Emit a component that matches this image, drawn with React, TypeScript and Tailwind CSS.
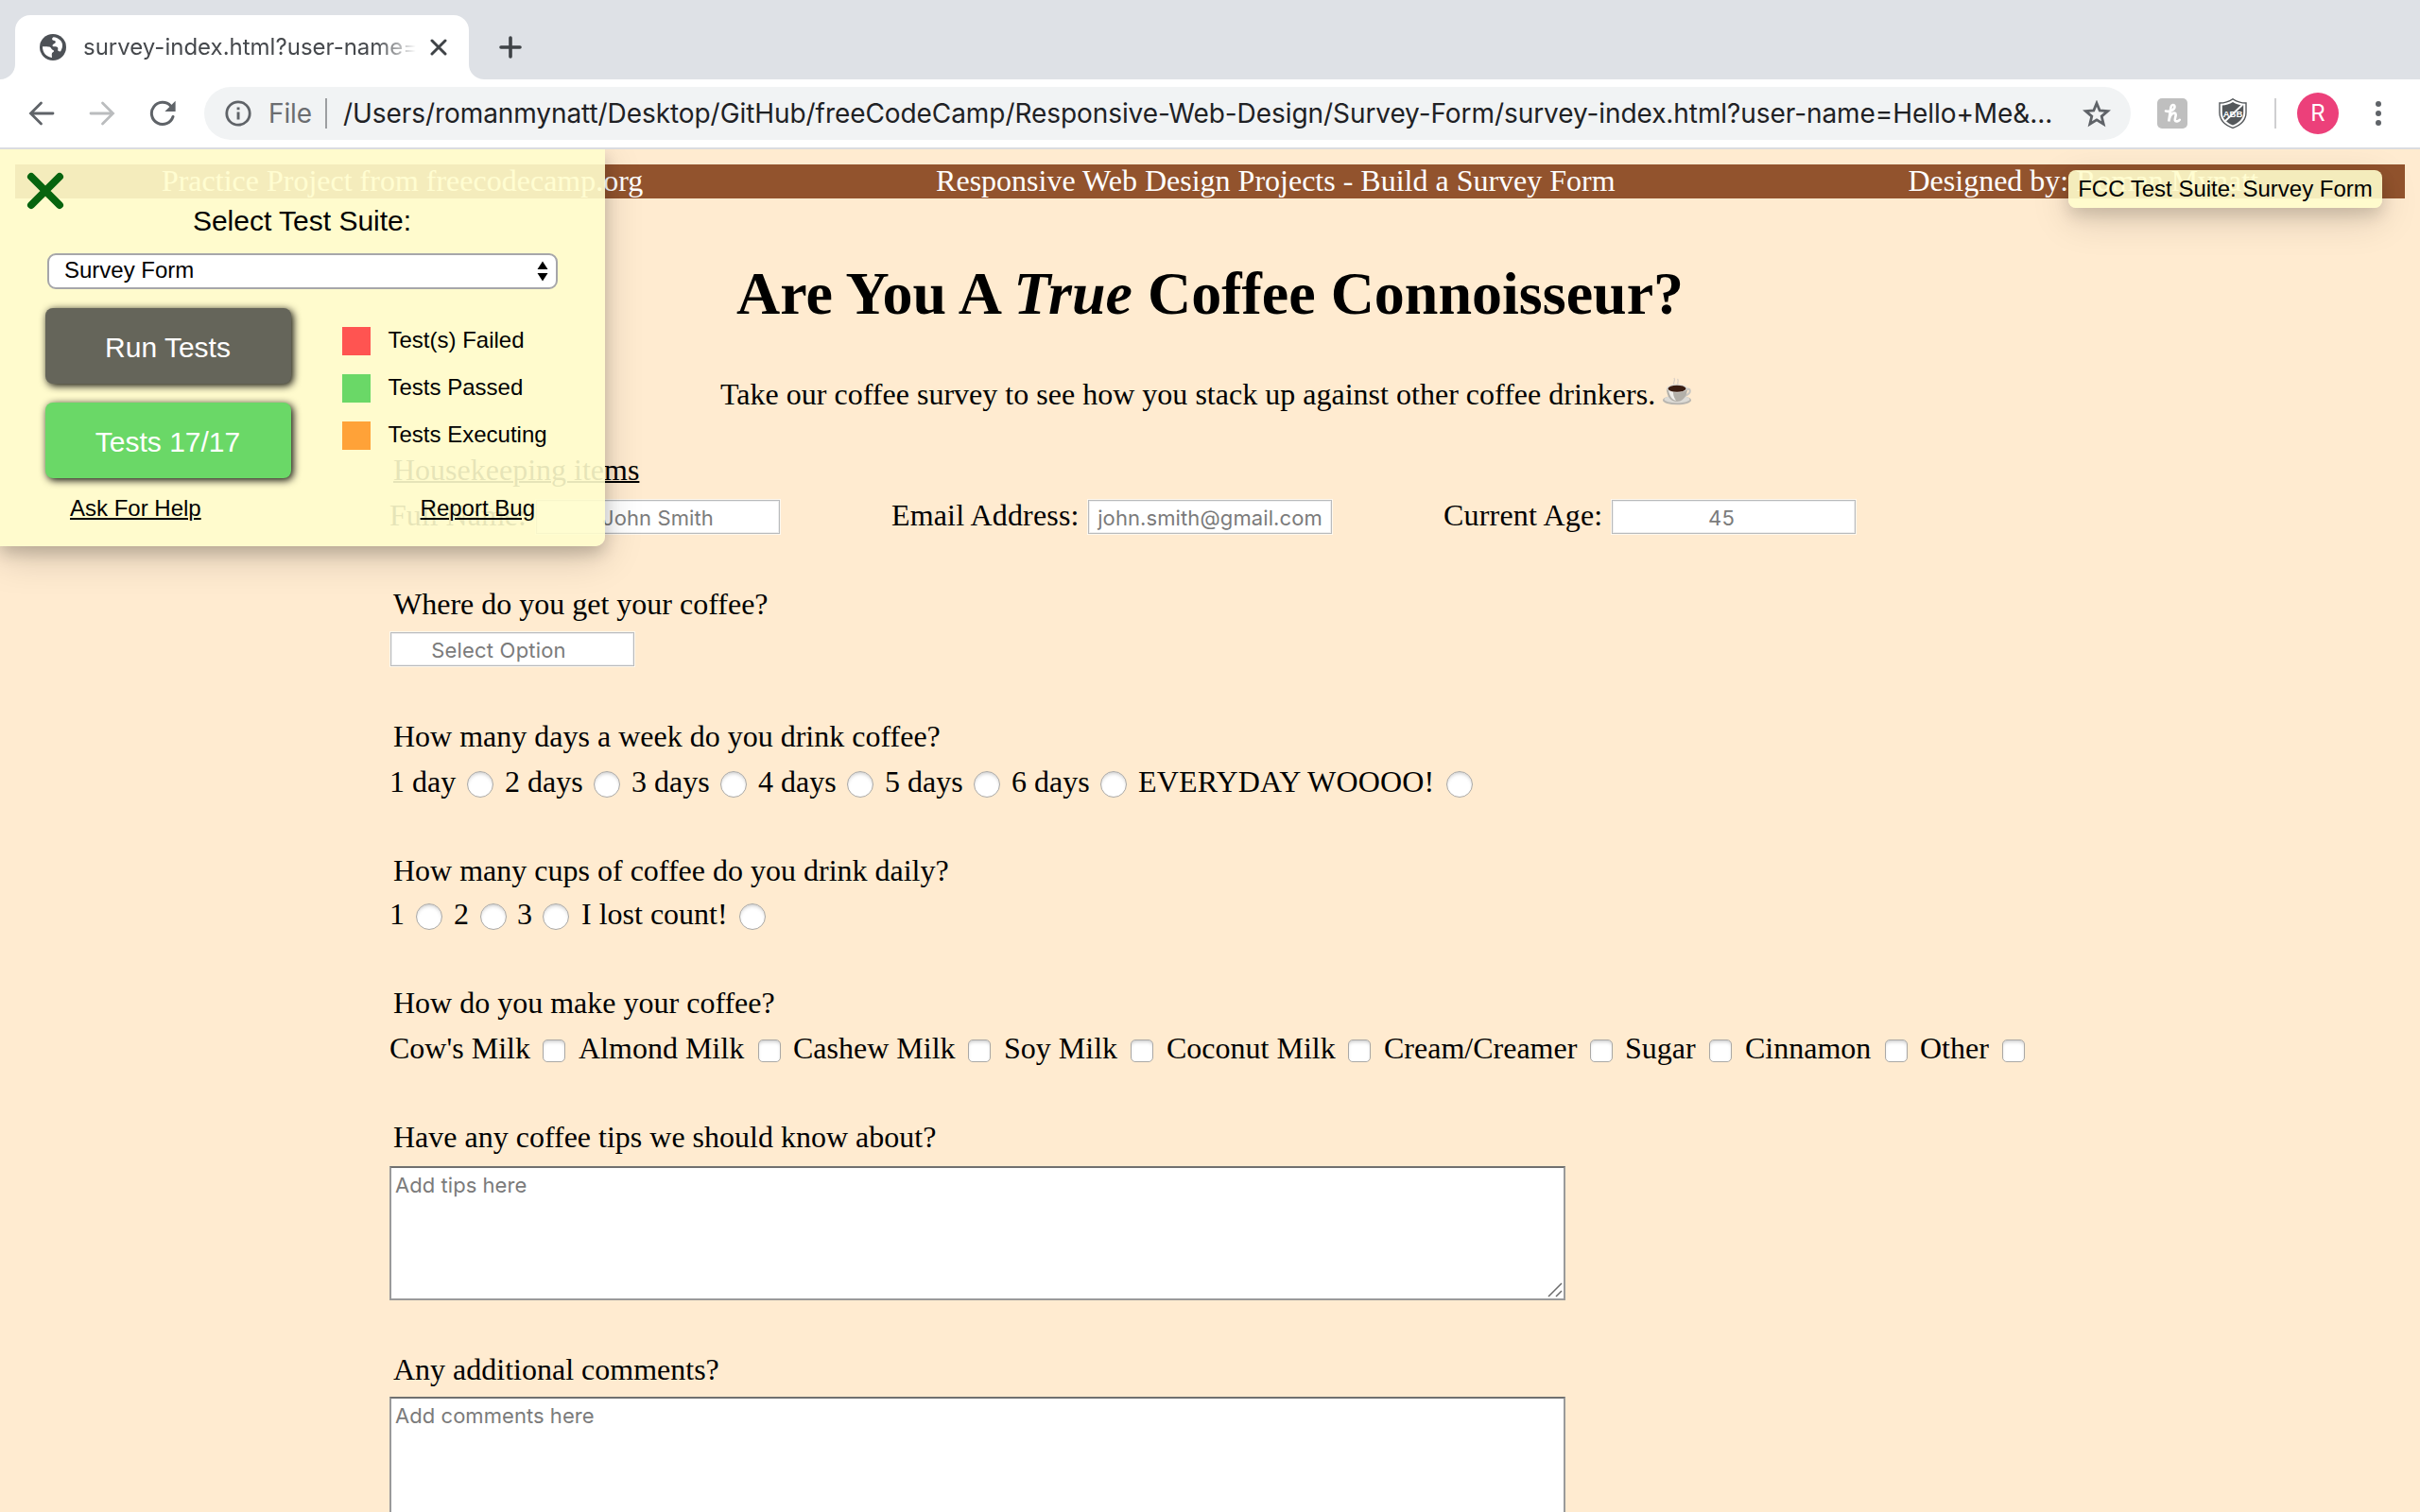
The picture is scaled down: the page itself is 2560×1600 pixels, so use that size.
import React from "react";

const serif = "font-['Liberation_Serif',serif]";
const sans = "font-['Liberation_Sans',sans-serif]";
const ui = "font-['Inter',sans-serif]";

const days = [
  { label: "1 day", cell: "w-[110px]" },
  { label: "2 days", cell: "w-[134px] pl-[12px]" },
  { label: "3 days", cell: "w-[134px] pl-[12px]" },
  { label: "4 days", cell: "w-[134px] pl-[12px]" },
  { label: "5 days", cell: "w-[134px] pl-[12px]" },
  { label: "6 days", cell: "w-[134px] pl-[12px]" },
  { label: "EVERYDAY WOOOO!", cell: "w-[366px] pl-[12px] tracking-[0.17px]" },
];

const cups = [
  { label: "1", cell: "w-[56px]" },
  { label: "2", cell: "w-[68px] pl-[12px]" },
  { label: "3", cell: "w-[66px] pl-[11px]" },
  { label: "I lost count!", cell: "w-[208px] pl-[13px]" },
];

const extras = [
  { label: "Cow's Milk", cell: "w-[186px]" },
  { label: "Almond Milk", cell: "w-[228px] pl-[14px]" },
  { label: "Cashew Milk", cell: "w-[222px] pl-[13px]" },
  { label: "Soy Milk", cell: "w-[172px] pl-[14px]" },
  { label: "Coconut Milk", cell: "w-[230px] pl-[14px]" },
  { label: "Cream/Creamer", cell: "w-[256px] pl-[14px]" },
  { label: "Sugar", cell: "w-[126px] pl-[13px]" },
  { label: "Cinnamon", cell: "w-[186px] pl-[14px]" },
  { label: "Other", cell: "w-[124px] pl-[13px]" },
];

function TabStrip() {
  return (
    <div className={`flex h-[84px] shrink-0 items-end bg-[#dee1e6] ${ui}`}>
      <svg width="16" height="16" className="shrink-0">
        <path d="M16 0V16H0A16 16 0 0 0 16 0Z" fill="#fff" />
      </svg>
      <div className="flex h-[68px] w-[480px] items-center rounded-t-[16px] bg-white pl-[26px]">
        <svg width="28" height="28" viewBox="0 0 28 28" className="shrink-0">
          <circle cx="14" cy="14" r="14" fill="#4d5156" />
          <path
            d="M14.5 3.2C13 4 12.800 5.500 13.500 6.300C14.500 7.400 16.500 6.600 16.800 8.200C17 10 14 10.400 13.500 12C13.200 13.400 15 13.200 17 13.300C19.500 13.500 19.600 15 19.200 16.600C18.800 18 20 18.300 22 18.400C24 15.500 25.400 10.500 22 6.800C20 4.700 17 3.200 14.500 3.200Z"
            fill="#fff"
          />
          <path
            d="M3 13.300C5 13.200 8.500 13.300 10 13.600C12.500 14.200 12 16 13.600 16.700C15.500 17.300 15.400 18.600 14 19.300C12.300 20 12.800 21.800 13 24.900C7.500 24.700 2.800 19.800 3 13.300Z"
            fill="#fff"
          />
        </svg>
        <div className="ml-[18px] w-[352px] overflow-hidden whitespace-nowrap text-[24px] leading-[36px] text-[#45484c] [mask-image:linear-gradient(to_right,#000_310px,transparent_352px)]">
          survey-index.html?user-name=
        </div>
        <svg width="18" height="18" viewBox="0 0 18 18" className="ml-[15px] shrink-0">
          <path d="M2 2L16 16M16 2L2 16" stroke="#3f4347" strokeWidth="3" strokeLinecap="round" />
        </svg>
      </div>
      <svg width="16" height="16" className="shrink-0">
        <path d="M0 0V16H16A16 16 0 0 1 0 0Z" fill="#fff" />
      </svg>
      <svg width="24" height="24" viewBox="0 0 24 24" className="mb-[22px] ml-[16px] shrink-0">
        <path d="M12 2V22M2 12H22" stroke="#3f4347" strokeWidth="3.600" strokeLinecap="round" />
      </svg>
    </div>
  );
}

function Toolbar() {
  return (
    <div className={`flex h-[74px] shrink-0 items-center border-b-2 border-[#dadce0] bg-white ${ui}`}>
      <svg width="28" height="28" viewBox="0 0 28 28" fill="none" stroke="#5f6368" strokeWidth="2.800" strokeLinecap="round" className="ml-[30px] shrink-0">
        <path d="M26 14H3M13.500 3L2.500 14L13.500 25" />
      </svg>
      <svg width="28" height="28" viewBox="0 0 28 28" fill="none" stroke="#babcbe" strokeWidth="2.800" strokeLinecap="round" className="ml-[36px] shrink-0">
        <path d="M2 14H25M14.500 3L25.500 14L14.500 25" />
      </svg>
      <svg width="28" height="28" viewBox="0 0 28 28" className="ml-[36px] shrink-0">
        <path d="M25 17.500A11.600 11.600 0 1 1 22.500 6" fill="none" stroke="#5f6368" strokeWidth="3" strokeLinecap="round" />
        <path d="M27.600 0.800V12H16.400Z" fill="#5f6368" />
      </svg>
      <div className="ml-[30px] flex h-[56px] w-[2038px] items-center rounded-full bg-[#f1f3f4] pl-[22px]">
        <svg width="28" height="28" viewBox="0 0 28 28" className="shrink-0">
          <circle cx="14" cy="14" r="12.200" fill="none" stroke="#5f6368" strokeWidth="2.800" />
          <path d="M12.600 12.400h2.900v8.200h-2.900zM12.600 7.400h2.900v2.900h-2.900z" fill="#5f6368" />
        </svg>
        <div className="ml-[18px] w-[60px] shrink-0 text-[28px] leading-[40px] tracking-[-0.1px] text-[#6b6d70]">File</div>
        <div className="h-[32px] w-[2px] shrink-0 bg-[#9c9ea1]" />
        <div className="ml-[17px] w-[1840px] shrink-0 whitespace-nowrap text-[28px] leading-[40px] tracking-[-0.07px] text-[#202124]">
          /Users/romanmynatt/Desktop/GitHub/freeCodeCamp/Responsive-Web-Design/Survey-Form/survey-index.html?user-name=Hello+Me&amp;...
        </div>
        <svg width="30" height="29" viewBox="0 0 30 29" className="shrink-0">
          <path d="M15 3.200L18.200 11L26.600 11.600L20.200 17.100L22.200 25.300L15 20.900L7.800 25.300L9.800 17.100L3.400 11.600L11.800 11Z" fill="none" stroke="#5f6368" strokeWidth="2.800" />
        </svg>
      </div>
      <svg width="32" height="32" viewBox="0 0 32 32" className="ml-[28px] shrink-0">
        <rect width="32" height="32" rx="5" fill="#bfbfbf" />
        <path
          d="M9 13.500C12.500 14.600 18.500 12.500 18.500 9C18.400 6.200 15 6.300 14.400 10L12.200 24.500C13 19.500 15.200 15.500 18.200 15.600C21.500 15.900 18.200 21.500 18.800 23.300C19.400 25 22.500 24.600 23.800 22.800"
          fill="none"
          stroke="#fff"
          strokeWidth="2.600"
          strokeLinecap="round"
        />
      </svg>
      <svg width="32" height="32" viewBox="0 0 32 32" className="ml-[32px] shrink-0">
        <path d="M16 0.700C20 3.600 25 5 30 5V15C30 23 24 28.500 16 31.400C8 28.500 2 23 2 15V5C7 5 12 3.600 16 0.700Z" fill="#fff" stroke="#54585b" strokeWidth="1.400" />
        <path d="M16 4C19.500 6.200 23.500 7.300 27.200 7.400V15C27.200 21.500 22.500 26 16 28.500C9.500 26 4.800 21.500 4.800 15V7.400C8.500 7.300 12.500 6.200 16 4Z" fill="#54585b" />
        <text x="16" y="19.500" textAnchor="middle" fontSize="9.500" fontWeight="700" fontFamily="Liberation Sans, sans-serif" fill="#fff">
          ABB
        </text>
        <path d="M7 25L26 7" stroke="#fff" strokeWidth="1.800" />
      </svg>
      <div className="ml-[28px] h-[32px] w-[2px] bg-[#cfcfd1]" />
      <div className="ml-[22px] flex h-[44px] w-[44px] items-center justify-center rounded-full bg-[#ec407a] text-[24px] text-white">R</div>
      <div className="ml-[39px] flex flex-col gap-[4px]">
        <div className="h-[6px] w-[6px] rounded-full bg-[#5f6368]" />
        <div className="h-[6px] w-[6px] rounded-full bg-[#5f6368]" />
        <div className="h-[6px] w-[6px] rounded-full bg-[#5f6368]" />
      </div>
    </div>
  );
}

function Coffee() {
  return (
    <svg width="32" height="30" viewBox="0 0 32 30" className="ml-[7px] shrink-0">
      <path d="M13 8C11 5.500 15 4.500 13 1M17 8C16 5 18.500 4 16.500 2" fill="none" stroke="#d9cfc4" strokeWidth="1.200" />
      <ellipse cx="16" cy="24.500" rx="15" ry="4.800" fill="#b9b6b0" />
      <ellipse cx="16" cy="23.500" rx="13.500" ry="3.800" fill="#dddbd6" />
      <path d="M25 13C31 11 32 17 24 20" fill="none" stroke="#c9c7c2" strokeWidth="2.200" />
      <path d="M5 12C5 20 9 26 16 26C22 26 27 20 27 12Z" fill="#b3b0a9" />
      <path d="M7 14C8 20 11 24 15 25C12 20 12 18 12 14Z" fill="#efeeeb" />
      <ellipse cx="16" cy="12" rx="11" ry="4.400" fill="#dddbd6" />
      <ellipse cx="16" cy="12.200" rx="9.500" ry="3.500" fill="#3a1c10" />
    </svg>
  );
}

function Field({ children, className }: { children: React.ReactNode; className: string }) {
  return (
    <div className={`flex h-[38px] w-[260px] shrink-0 border border-[#fff8ee] bg-white ${className}`}>
      <div className={`flex grow items-center justify-center border border-[#b9bbbd] pt-[2px] text-[22px] leading-[30px] tracking-[0.1px] text-[#7b7b7b] shadow-[inset_0_0_0_1px_#efefef] ${ui}`}>
        {children}
      </div>
    </div>
  );
}

function Legend({ children, className }: { children: React.ReactNode; className: string }) {
  return <div className={`ml-[416px] h-[36px] whitespace-nowrap ${className}`}>{children}</div>;
}

function Radio() {
  return (
    <span className="mt-[7px] h-[28px] w-[28px] shrink-0 rounded-full border border-[#aaa8a5] bg-white shadow-[inset_0_3px_4px_-2px_rgba(0,0,0,0.25)]" />
  );
}

function Checkbox() {
  return (
    <span className="mt-[9px] h-[24px] w-[24px] shrink-0 rounded-[5px] border border-[#aaa8a5] bg-white shadow-[inset_0_3px_4px_-2px_rgba(0,0,0,0.25)]" />
  );
}

function TextArea({ children, className }: { children: React.ReactNode; className: string }) {
  return (
    <div
      className={`ml-[412px] flex w-[1244px] shrink-0 items-start justify-between border-2 border-b-[#9a9a9a] border-l-[#9a9a9a] border-r-[#9a9a9a] border-t-[#707070] bg-white ${ui} ${className}`}
    >
      <div className="ml-[4px] mt-[2px] text-[22px] leading-[32px] tracking-[0.05px] text-[#7b7b7b]">{children}</div>
      <svg width="18" height="18" viewBox="0 0 18 18" className="self-end">
        <path d="M2 16L16 2M10 16L16 10" stroke="#6b6b6b" strokeWidth="1.500" />
      </svg>
    </div>
  );
}

function Survey() {
  return (
    <div className={`flex grow flex-col text-[32px] leading-[36px] text-black ${serif}`}>
      <div className="mx-[16px] mt-[16px] flex h-[36px] shrink-0 items-start justify-around bg-[#92532d] leading-[34px] text-white">
        <span>Practice Project from freecodecamp.org</span>
        <span>Responsive Web Design Projects - Build a Survey Form</span>
        <span>Designed by: Roman Mynatt</span>
      </div>
      <h1 className="mt-[65px] h-[72px] text-center text-[64px] font-bold leading-[72px]">
        Are You A <em>True</em> Coffee Connoisseur?
      </h1>
      <div className="mt-[52px] flex h-[36px] pl-[762px] whitespace-nowrap">
        <span className="tracking-[0.013px]">Take our coffee survey to see how you stack up against other coffee drinkers.</span>
        <Coffee />
      </div>
      <Legend className="mt-[44px] underline decoration-2">Housekeeping items</Legend>
      <div className="ml-[412px] mt-[12px] flex h-[38px] whitespace-nowrap">
        <span className="w-[154px]">Full Name:</span>
        <Field className="mt-[1px]">John Smith</Field>
        <span className="ml-[117px] w-[207px] tracking-[0.15px]">Email Address:</span>
        <Field className="mt-[1px]">john.smith@gmail.com</Field>
        <span className="ml-[117px] w-[177px] tracking-[0.18px]">Current Age:</span>
        <Field className="mt-[1px]">
          <span className="pr-[26px]">45</span>
        </Field>
      </div>
      <Legend className="mt-[56px]">Where do you get your coffee?</Legend>
      <Field className="ml-[412px] mt-[11px]">
        <span className="pr-[29px] tracking-[0.2px]">Select Option</span>
      </Field>
      <Legend className="mt-[55px]">How many days a week do you drink coffee?</Legend>
      <div className="ml-[412px] mt-[12px] flex h-[36px] whitespace-nowrap">
        {days.map((d) => (
          <label key={d.label} className={`flex justify-between ${d.cell}`}>
            {d.label}
            <Radio />
          </label>
        ))}
      </div>
      <Legend className="mt-[58px]">How many cups of coffee do you drink daily?</Legend>
      <div className="ml-[412px] mt-[10px] flex h-[36px] whitespace-nowrap">
        {cups.map((c) => (
          <label key={c.label} className={`flex justify-between ${c.cell}`}>
            {c.label}
            <Radio />
          </label>
        ))}
      </div>
      <Legend className="mt-[58px]">How do you make your coffee?</Legend>
      <div className="ml-[412px] mt-[12px] flex h-[36px] whitespace-nowrap">
        {extras.map((e) => (
          <label key={e.label} className={`flex justify-between ${e.cell}`}>
            {e.label}
            <Checkbox />
          </label>
        ))}
      </div>
      <Legend className="mt-[58px]">Have any coffee tips we should know about?</Legend>
      <TextArea className="mt-[13px] h-[142px]">Add tips here</TextArea>
      <Legend className="mt-[55px]">Any additional comments?</Legend>
      <TextArea className="mt-[11px] h-[142px]">Add comments here</TextArea>
    </div>
  );
}

function LegendRow({ color, children }: { color: string; children: React.ReactNode }) {
  return (
    <div className="flex h-[30px] items-start gap-[18.5px] text-[24px] leading-[28px]">
      <span className={`h-[30px] w-[30px] ${color}`} />
      {children}
    </div>
  );
}

function TestPanel() {
  return (
    <div
      className={`absolute left-0 top-0 flex h-[420px] w-[640px] flex-col rounded-br-[10px] bg-[rgba(255,253,204,0.9)] text-black shadow-[0_8px_16px_rgba(0,0,0,0.17),0_12px_40px_rgba(0,0,0,0.17)] ${sans}`}
    >
      <svg width="40" height="40" viewBox="0 0 40 40" className="ml-[28px] mt-[24px] shrink-0">
        <path d="M5 5L35 35M35 5L5 35" stroke="#07640f" strokeWidth="8" strokeLinecap="round" />
      </svg>
      <div className="-mt-[5px] h-[34px] pr-[1px] text-center text-[30px] leading-[34px]">Select Test Suite:</div>
      <div className="ml-[50px] mt-[17px] flex h-[38px] w-[540px] items-center justify-between rounded-[9px] border-2 border-[#a6a6aa] bg-white pl-[16px] pr-[8px] text-[24px] leading-[28px]">
        <span className="-mt-[3px]">Survey Form</span>
        <svg width="12" height="22" viewBox="0 0 12 22">
          <path d="M6 0.500L11.500 9H0.500ZM6 21.500L11.500 13H0.500Z" fill="#000" />
        </svg>
      </div>
      <div className="mt-[20px] flex pl-[48px]">
        <div className="flex w-[260px] flex-col gap-[20px] text-[30px] text-white">
          <div className="flex h-[80px] items-center justify-center rounded-[8px] bg-[#65655a] pr-[1px] pt-[2px] shadow-[2px_2px_8px_#000]">Run Tests</div>
          <div className="flex h-[80px] items-center justify-center rounded-[8px] bg-[#6ad867] pr-[1px] pt-[2px] shadow-[2px_2px_8px_#000]">Tests 17/17</div>
        </div>
        <div className="ml-[54px] flex flex-col gap-[20px] pt-[20px]">
          <LegendRow color="bg-[#ff5451]">Test(s) Failed</LegendRow>
          <LegendRow color="bg-[#6ad867]">Tests Passed</LegendRow>
          <LegendRow color="bg-[#ffa238]">Tests Executing</LegendRow>
        </div>
      </div>
      <div className="mt-[18px] flex justify-between pl-[74px] pr-[74px] text-[24px] leading-[28px] underline decoration-2 underline-offset-2">
        <span>Ask For Help</span>
        <span>Report Bug</span>
      </div>
    </div>
  );
}

export default function App() {
  return (
    <div className="flex h-[1600px] w-[2560px] flex-col overflow-hidden bg-[#ffebd0]">
      <TabStrip />
      <Toolbar />
      <div className="relative flex h-[1442px] shrink-0 flex-col overflow-hidden">
        <Survey />
        <TestPanel />
        <div
          className={`absolute right-[40px] top-[22px] flex h-[40px] w-[332px] items-center justify-center whitespace-nowrap rounded-[8px] bg-[rgba(255,253,204,0.9)] text-[24px] text-black shadow-[0_8px_16px_rgba(0,0,0,0.13),0_12px_40px_rgba(0,0,0,0.15)] ${sans}`}
        >
          FCC Test Suite: Survey Form
        </div>
      </div>
    </div>
  );
}
